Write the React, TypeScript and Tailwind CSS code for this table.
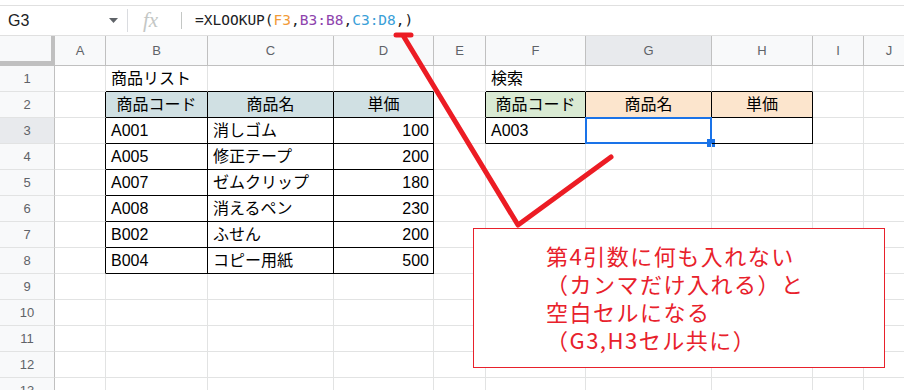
import React from 'react';

// Spreadsheet view: formula bar, sheet grid with two bordered tables, and a note callout

const COLS = ['A', 'B', 'C', 'D', 'E', 'F', 'G', 'H', 'I', 'J'];
const ROW_COUNT = 13;

type Cell = { text: string; align?: 'left' | 'center' | 'right'; bg?: string };

const products: [string, string, string][] = [
  ['A001', '消しゴム', '100'],
  ['A005', '修正テープ', '200'],
  ['A007', 'ゼムクリップ', '180'],
  ['A008', '消えるペン', '230'],
  ['B002', 'ふせん', '200'],
  ['B004', 'コピー用紙', '500'],
];

function buildSheet(): Record<string, Cell> {
  const cells: Record<string, Cell> = {
    B1: { text: '商品リスト' },
    F1: { text: '検索' },
    B2: { text: '商品コード', align: 'center', bg: 'bg-[#d0e0e3]' },
    C2: { text: '商品名', align: 'center', bg: 'bg-[#d0e0e3]' },
    D2: { text: '単価', align: 'center', bg: 'bg-[#d0e0e3]' },
    F2: { text: '商品コード', align: 'center', bg: 'bg-[#d9ead3]' },
    G2: { text: '商品名', align: 'center', bg: 'bg-[#fce5cd]' },
    H2: { text: '単価', align: 'center', bg: 'bg-[#fce5cd]' },
    F3: { text: 'A003' },
  };
  products.forEach(([code, name, price], i) => {
    const r = i + 3;
    cells[`B${r}`] = { text: code };
    cells[`C${r}`] = { text: name };
    cells[`D${r}`] = { text: price, align: 'right' };
  });
  return cells;
}

const sheet = buildSheet();

// table ranges: [rowFrom, rowTo, colFrom, colTo] (col 1 = A)
const tables: [number, number, number, number][] = [
  [2, 8, 2, 4],
  [2, 3, 6, 8],
];

function inTable(r: number, c: number) {
  return tables.some(([r1, r2, c1, c2]) => r >= r1 && r <= r2 && c >= c1 && c <= c2);
}

function borderClasses(r: number, c: number) {
  const right = inTable(r, c) || inTable(r, c + 1);
  const bottom = inTable(r, c) || inTable(r + 1, c);
  return [
    'border-r border-b',
    right ? 'border-r-black' : 'border-r-[#e2e3e3]',
    bottom ? 'border-b-black' : 'border-b-[#e2e3e3]',
  ].join(' ');
}

function FormulaBar() {
  return (
    <div className="flex h-[31px] items-center border-y border-[#e0e0e0] text-[#202124]">
      <div className="flex w-[127px] items-center justify-between pl-2 pr-[9px] text-[16px]">
        <span>G3</span>
        <svg width="9" height="5" viewBox="0 0 9 5">
          <path d="M0 0h9L4.5 5z" fill="#5f6368" />
        </svg>
      </div>
      <span className="h-[23px] w-px bg-[#dadce0]" />
      <span className="ml-[15px] w-[22px] font-['Liberation_Serif'] text-[21px] italic leading-none text-[#c4c7c5]">
        fx
      </span>
      <span className="ml-[16px] h-[17px] w-px bg-[#c4c7c5]" />
      <span className="ml-[13px] whitespace-pre font-['DejaVu_Sans_Mono',monospace] text-[14.5px]">
        =XLOOKUP(<span className="text-[#f29b38]">F3</span>,
        <span className="text-[#8e44ad]">B3:B8</span>,
        <span className="text-[#3aa0d8]">C3:D8</span>,)
      </span>
    </div>
  );
}

function ColumnHeader() {
  return (
    <>
      <div className="h-[30px] border-r-4 border-b-[5px] border-[#c0c0c0] bg-[#f8f9fa]" />
      {COLS.map((col) => (
        <div
          key={col}
          className={`flex h-[30px] items-center justify-center border-r border-b border-r-[#c0c0c0] border-b-[#c0c0c0] text-[13px] text-[#5f6368] ${
            col === 'G' ? 'bg-[#e8eaed]' : 'bg-[#f8f9fa]'
          }`}
        >
          {col}
        </div>
      ))}
    </>
  );
}

function SheetRow({ r }: { r: number }) {
  return (
    <>
      <div
        className={`flex h-[26px] items-center justify-center border-r border-b border-r-[#c0c0c0] border-b-[#e2e3e3] text-[13px] text-[#5f6368] ${
          r === 3 ? 'bg-[#e8eaed]' : 'bg-[#f8f9fa]'
        }`}
      >
        {r}
      </div>
      {COLS.map((col, i) => {
        const c = i + 1;
        const cell = sheet[`${col}${r}`];
        const align =
          cell?.align === 'center'
            ? 'justify-center'
            : cell?.align === 'right'
            ? 'justify-end pr-1'
            : 'justify-start pl-[5px]';
        const selected = col === 'G' && r === 3;
        return (
          <div
            key={col}
            className={`relative flex h-[26px] items-center whitespace-nowrap text-[16px] text-black ${align} ${borderClasses(
              r,
              c
            )} ${cell?.bg ?? ''}`}
          >
            {cell?.text}
            {selected && (
              <div className="absolute -inset-px border-2 border-[#1a73e8]">
                <div className="absolute -right-[5px] -bottom-[5px] h-[8px] w-[8px] bg-[#1a73e8]" />
              </div>
            )}
          </div>
        );
      })}
    </>
  );
}

function NoteCallout() {
  return (
    <div className="absolute left-[473px] top-[228px] h-[140px] w-[412px] border border-[#e8212b] bg-white pl-[72px] pt-[12px] font-['Noto_Sans_CJK_JP',sans-serif] text-[22px] leading-[28px] tracking-[1.5px] text-[#e8212b]">
      <div>第4引数に何も入れない</div>
      <div>（カンマだけ入れる）と</div>
      <div>空白セルになる</div>
      <div>（G3,H3セル共に）</div>
    </div>
  );
}

function Arrow() {
  return (
    <svg className="pointer-events-none absolute left-0 top-0" width="904" height="390">
      <g stroke="#ec1c24" strokeWidth="5" strokeLinecap="round" strokeLinejoin="round" fill="none">
        <path d="M396 35h15" />
        <path d="M404 37L518 225L611 157" />
      </g>
    </svg>
  );
}

export default function App() {
  return (
    <div className="relative h-[390px] w-[904px] overflow-hidden bg-white pt-[5px] font-['Liberation_Sans','Noto_Sans_CJK_JP',sans-serif]">
      <FormulaBar />
      <div className="grid grid-cols-[55px_51px_102px_126px_100px_52px_100px_126px_101px_51px_51px]">
        <ColumnHeader />
        {Array.from({ length: ROW_COUNT }, (_, i) => (
          <SheetRow key={i} r={i + 1} />
        ))}
      </div>
      <NoteCallout />
      <Arrow />
    </div>
  );
}
